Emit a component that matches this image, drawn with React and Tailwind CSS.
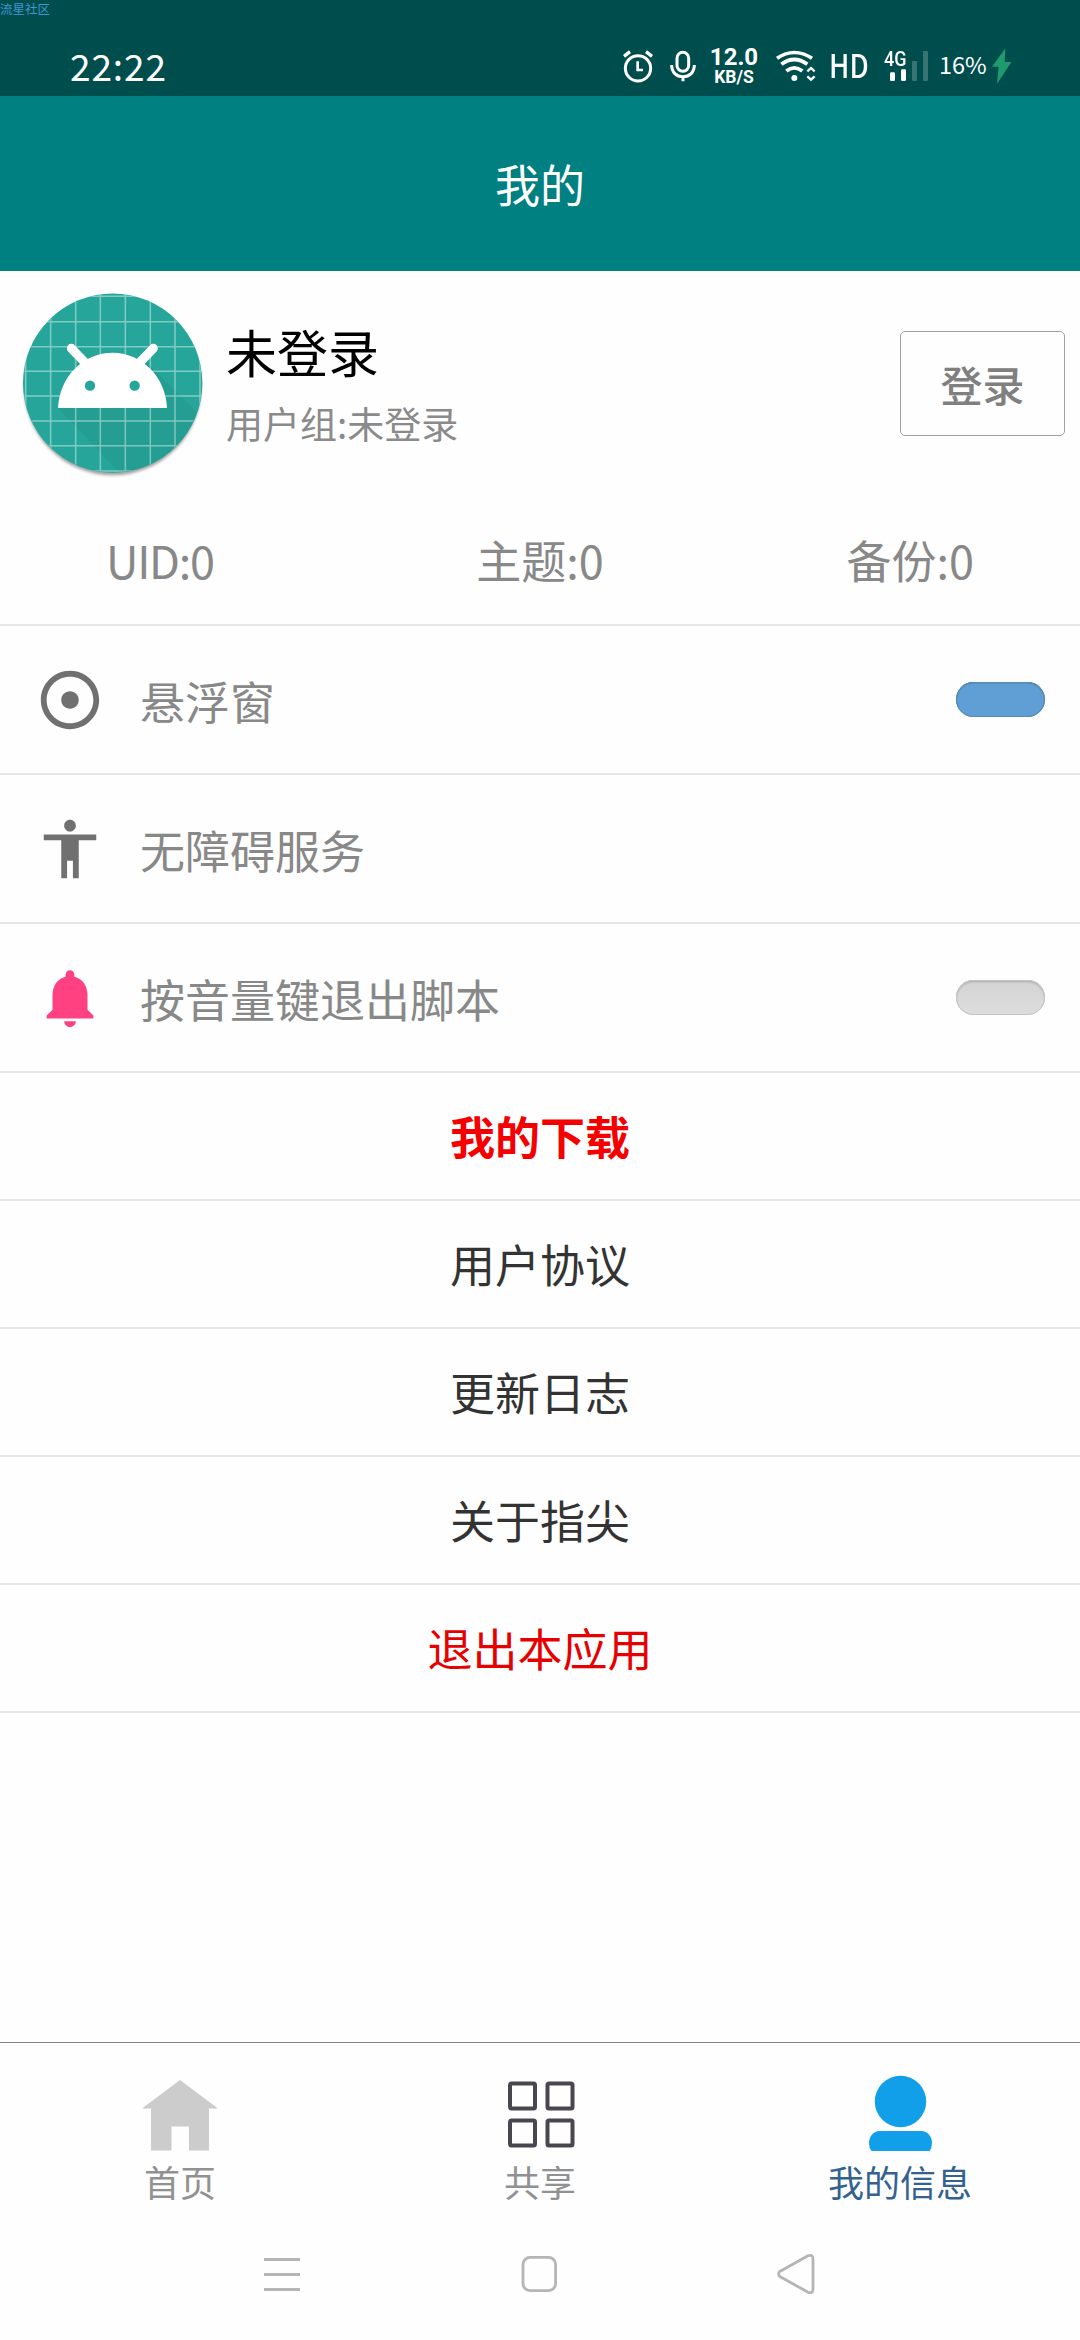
import React from 'react';

const settings = [
  { label: '悬浮窗', icon: 'target', toggle: 'on' },
  { label: '无障碍服务', icon: 'person' },
  { label: '按音量键退出脚本', icon: 'bell', toggle: 'off' },
];

const links = [
  { label: '我的下载', style: 'text-[#f50000] font-bold' },
  { label: '用户协议', style: 'text-[#333333]' },
  { label: '更新日志', style: 'text-[#333333]' },
  { label: '关于指尖', style: 'text-[#333333]' },
  { label: '退出本应用', style: 'text-[#e60000]' },
];

const iconPaths = {
  target: 'M12 2C6.49 2 2 6.49 2 12s4.49 10 10 10 10-4.49 10-10S17.51 2 12 2zm0 18c-4.41 0-8-3.59-8-8s3.59-8 8-8 8 3.59 8 8-3.59 8-8 8zm3-8c0 1.66-1.34 3-3 3s-3-1.34-3-3 1.34-3 3-3 3 1.34 3 3z',
  person: 'M12 2c1.1 0 2 .9 2 2s-.9 2-2 2-2-.9-2-2 .9-2 2-2zm9 7h-6v13h-2v-6h-2v6H9V9H3V7h18v2z',
  bell: 'M12 22c1.1 0 2-.9 2-2h-4c0 1.1.89 2 2 2zm6-6v-5c0-3.07-1.64-5.64-4.5-6.32V4c0-.83-.67-1.5-1.5-1.5s-1.5.67-1.5 1.5v.68C7.63 5.36 6 7.92 6 11v5l-2 2v1h16v-1l-2-2z',
};

const StatusBar = () => (
  <div className="relative flex h-[96px] items-start bg-[#004d4d] text-white">
    <span className="absolute left-0 top-0 text-[12.5px] leading-[18px] text-[#3f97d3]">流星社区</span>
    <span className="ml-[70px] mt-[38px] w-[553px] text-[37px] leading-[54px] tracking-[0.9px]">22:22</span>

    {/* Alarm */}
    <svg className="mt-[50px] h-[33px] w-[30px] shrink-0" viewBox="66 60 90 99" fill="none" stroke="#fff">
      <circle cx="111" cy="115" r="38" strokeWidth="9" />
      <path d="M110 94v26h16" strokeWidth="8" />
      <path d="M69 79l18-14M153 79l-18-14" strokeWidth="10" />
    </svg>
    {/* Mic */}
    <svg className="ml-[17px] mt-[50px] h-[33px] w-[26px] shrink-0" viewBox="207 60 78 99" fill="none" stroke="#fff" strokeWidth="9">
      <rect x="228" y="67" width="35" height="57" rx="17.5" />
      <path d="M212 105c0 22 14 35 34 35s34-13 34-35M246 140v14" />
    </svg>
    <div className="ml-[13px] mt-[46px] flex w-[50px] flex-col items-center font-['Roboto'] font-bold">
      <span className="text-[24px] leading-[23px]">12.0</span>
      <span className="text-[17.5px] leading-[17px]">KB/S</span>
    </div>
    {/* Wifi */}
    <svg className="ml-[17px] mt-[50px] h-[33px] w-[40px] shrink-0" viewBox="527 60 120 99" fill="none" stroke="#fff">
      <path d="M530 85Q582 50 635 85" strokeWidth="11" />
      <path d="M543 103Q582 74 621 103" strokeWidth="11" />
      <path d="M558 123Q582 104 606 123" strokeWidth="11" />
      <circle cx="582" cy="144" r="9" fill="#fff" stroke="none" />
      <path d="M621 124l11-10 11 10M621 139l11 10 11-10" strokeWidth="7" />
    </svg>
    <span className="ml-[13px] mt-[44px] w-[55px] shrink-0 origin-left scale-x-[0.86] text-[32px] font-medium leading-[40px]">HD</span>
    {/* Mobile signal */}
    <div className="relative mt-[50px] h-[33px] w-[45px] shrink-0">
      <span className="absolute left-0 top-[1px] origin-left scale-x-[0.9] font-['Roboto'] text-[20px] font-medium leading-[17px]">4G</span>
      <svg className="h-[33px] w-[45px]" viewBox="852 60 135 99" fill="#fff">
        <rect x="870" y="127" width="15" height="26" rx="4" />
        <rect x="903" y="118" width="15" height="35" rx="4" />
        <rect x="936" y="93" width="15" height="60" rx="3" opacity=".22" />
        <rect x="969" y="63" width="15" height="90" rx="3" opacity=".22" />
      </svg>
    </div>
    <span className="ml-[10px] mt-[47px] w-[53px] shrink-0 text-[23.5px] leading-[35px]">16%</span>
    <svg className="mt-[48px] h-[36px] w-[20px] shrink-0" viewBox="1175 54 60 108" fill="#1f9b6d">
      <path d="M1215 55l-40 55h20l-5 52 43-66h-20z" />
    </svg>
  </div>
);

const Avatar = () => (
  <svg className="h-[190px] w-[186px] shrink-0" viewBox="60 60 558 570">
    <defs>
      <clipPath id="disc">
        <circle cx="338" cy="339.5" r="268" />
      </clipPath>
      <filter id="soft" x="-10%" y="-10%" width="120%" height="120%">
        <feGaussianBlur stdDeviation="5" />
      </filter>
    </defs>
    <circle cx="338" cy="350" r="266" fill="#000" opacity=".36" filter="url(#soft)" />
    <circle cx="338" cy="339.5" r="269" fill="#26a69a" />
    <g clipPath="url(#disc)">
      <path d="M174 414l190 200h260V460L440 276z" fill="#000" opacity=".05" />
      <path d="M77 60v560M152 60v560M227 60v560M301 60v560M376 60v560M451 60v560M525 60v560M600 60v560M60 79h560M60 155h560M60 230h560M60 304h560M60 378h560M60 453h560M60 527h560M60 603h560" stroke="#fff" strokeWidth="4.5" opacity=".42" />
    </g>
    <path d="M214 235l50 52M460 235l-50 52" stroke="#fff" strokeWidth="27" strokeLinecap="round" />
    <path d="M174 414C178 320 250 248 337.500 248S497 320 501 414z" fill="#fff" />
    <circle cx="270" cy="347" r="15.500" fill="#26a69a" />
    <circle cx="404" cy="347" r="15.500" fill="#26a69a" />
  </svg>
);

const Toggle = ({ on }) => (
  <div
    className={
      on
        ? 'h-[35px] w-[89px] rounded-full bg-[#5f9fd5] shadow-[inset_0_0_0_1px_#5889b2,inset_0_1px_2px_#4a7295]'
        : 'h-[35px] w-[89px] rounded-full bg-linear-to-b from-[#d3d3d3] to-[#dddddd] shadow-[inset_0_0_0_1px_#c4c4c4,inset_0_2px_2px_#adadad]'
    }
  />
);

const TabBar = () => (
  <div className="grid h-[177px] grid-cols-3 border-t border-[#808285] pt-[32px] text-[36px] leading-[52px]">
    <div className="flex flex-col items-center text-[#919191]">
      <svg className="h-[76px] w-[76px]" viewBox="0 0 76 76" fill="#cccccc">
        <path d="M38 5L76 33.500h-9V75.500H47V51.500H29.500V75.500H9V33.500H0z" />
      </svg>
      <span className="mt-[4px]">首页</span>
    </div>
    <div className="flex flex-col items-center text-[#919191]">
      <svg className="h-[76px] w-[76px]" viewBox="0 0 76 76" fill="none" stroke="#4a4650" strokeWidth="4">
        <rect x="8" y="8.500" width="25" height="25" rx="1.500" />
        <rect x="45.500" y="8.500" width="25" height="25" rx="1.500" />
        <rect x="8" y="45.500" width="25" height="25" rx="1.500" />
        <rect x="45.500" y="45.500" width="25" height="25" rx="1.500" />
      </svg>
      <span className="mt-[4px]">共享</span>
    </div>
    <div className="flex flex-col items-center text-[#336291]">
      <svg className="h-[76px] w-[76px]" viewBox="0 0 76 76" fill="#119fea">
        <ellipse cx="38.500" cy="26.500" rx="25.700" ry="25.700" />
        <path d="M18 56H59C66 56 70 62 70 68Q70 73 67.500 76H9.500Q7 73 7 68C7 62 11 56 18 56z" />
      </svg>
      <span className="mt-[4px]">我的信息</span>
    </div>
  </div>
);

const SystemNav = () => (
  <div className="flex h-[121px] items-start justify-between pl-[264px] pr-[265px] pt-[34px]">
    <svg className="h-[42px] w-[36px]" viewBox="0 0 36 42" fill="#b5b5b5">
      <path d="M0 5h36v3H0zM0 20h36v3H0zM0 35h36v3H0z" />
    </svg>
    <svg className="h-[42px] w-[36px]" viewBox="0 0 36 42" fill="none" stroke="#b5b5b5" strokeWidth="2.800">
      <rect x="2" y="4.400" width="32.600" height="33.200" rx="7" />
    </svg>
    <svg className="h-[42px] w-[38px]" viewBox="0 0 38 42" fill="none" stroke="#b5b5b5" strokeWidth="2.800" strokeLinejoin="round">
      <path d="M31 2.800L2.800 18.500Q.5 21 2.800 23.500L31 39.200Q36 41 36 36V6Q36 1 31 2.800z" />
    </svg>
  </div>
);

const App = () => {
  return (
    <div className="flex h-[2340px] w-[1080px] flex-col overflow-hidden bg-[#fefefe] font-['Noto_Sans_CJK_SC',sans-serif]">
      <StatusBar />
      <div className="flex h-[175px] items-center justify-center bg-[#008080] text-[45px] text-white">我的</div>

      {/* Profile */}
      <div className="flex h-[229px] items-start pl-[20px] pr-[15px] pt-[19px]">
        <Avatar />
        <div className="ml-[20px] mt-[21px] flex flex-col">
          <span className="text-[51px] leading-[80px] text-black">未登录</span>
          <span className="mt-[2px] text-[37px] leading-[60px] text-[#8a8a8a]">用户组:未登录</span>
        </div>
        <button className="ml-auto mt-[41px] h-[105px] w-[165px] rounded-[5px] border border-[#a0a0a0] text-[42px] font-medium text-[#808080]">登录</button>
      </div>
      <div className="grid h-[126px] grid-cols-3 items-center border-b-2 border-[#e6e6e6] px-[106px] pb-[4px] text-[45px] text-[#888888]">
        <span className="tracking-[-1.3px]">UID:0</span>
        <span className="text-center">主题:0</span>
        <span className="text-right">备份:0</span>
      </div>

      {/* Settings rows */}
      {settings.map((row) => (
        <div key={row.label} className="flex h-[149px] items-center border-b-2 border-[#e6e6e6] px-[35px]">
          <svg
            className={`size-[70px] ${row.icon === 'bell' ? 'fill-[#ff4081]' : 'fill-[#707070]'}`}
            viewBox="0 0 24 24"
          >
            <path d={iconPaths[row.icon]} />
          </svg>
          <span className="ml-[35px] mt-[2px] text-[45px] text-[#888888]">{row.label}</span>
          <div className="ml-auto">{row.toggle && <Toggle on={row.toggle === 'on'} />}</div>
        </div>
      ))}

      {/* Links */}
      {links.map((link) => (
        <div key={link.label} className={`flex h-[128px] items-center justify-center border-b-2 border-[#e6e6e6] text-[45px] ${link.style}`}>
          {link.label}
        </div>
      ))}

      <div className="flex-1" />
      <TabBar />
      <SystemNav />
    </div>
  );
};

export default App;
